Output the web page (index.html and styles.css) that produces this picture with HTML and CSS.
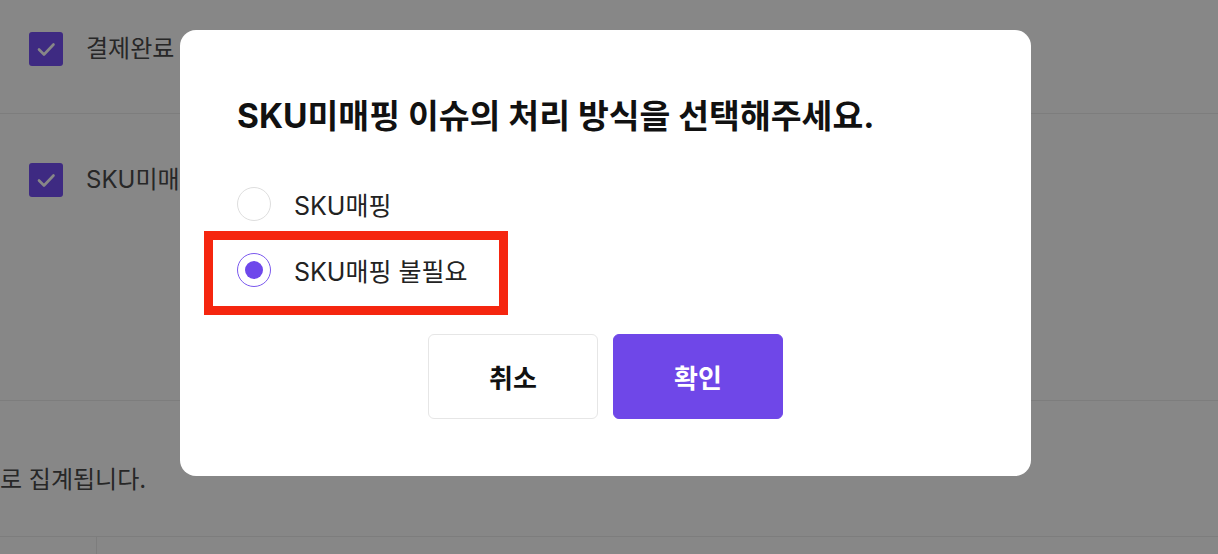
FILE: index.html
```html
<!DOCTYPE html>
<html lang="ko">
<head>
<meta charset="utf-8">
<title>SKU 미매핑 처리</title>
<link rel="stylesheet" href="styles.css">
</head>
<body>
<div class="page">
  <div class="row row-first">
    <span class="checkbox">
      <svg viewBox="0 0 34 34" width="34" height="34"><path d="M10 17.5 L15 22.5 L24.5 12.5" fill="none" stroke="#fff" stroke-width="2.6" stroke-linecap="round" stroke-linejoin="round"/></svg>
    </span>
    <span class="row-label">결제완료</span>
  </div>
  <div class="row row-second">
    <span class="checkbox">
      <svg viewBox="0 0 34 34" width="34" height="34"><path d="M10 17.5 L15 22.5 L24.5 12.5" fill="none" stroke="#fff" stroke-width="2.6" stroke-linecap="round" stroke-linejoin="round"/></svg>
    </span>
    <span class="row-label">SKU미매핑</span>
  </div>
  <div class="note">
    <p class="note-text">로 집계됩니다.</p>
  </div>
  <div class="table-row">
    <div class="cell cell-narrow"></div>
    <div class="cell"></div>
  </div>
</div>

<div class="overlay">
  <div class="modal">
    <h2 class="modal-title">SKU미매핑 이슈의 처리 방식을 선택해주세요.</h2>
    <div class="options">
      <label class="option">
        <span class="radio"></span>
        <span class="option-label">SKU매핑</span>
      </label>
      <label class="option">
        <span class="radio radio-on"><span class="radio-dot"></span></span>
        <span class="option-label">SKU매핑 불필요</span>
      </label>
    </div>
    <div class="actions">
      <button class="btn btn-cancel">취소</button>
      <button class="btn btn-confirm">확인</button>
    </div>
    <div class="highlight"></div>
  </div>
</div>
</body>
</html>
```

FILE: styles.css
```css
* { box-sizing: border-box; }

html, body {
  margin: 0;
  padding: 0;
  background: #ffffff;
  font-family: Inter, "Noto Sans CJK KR", sans-serif;
  color: #444444;
  overflow: hidden;
}

.page {
  width: 1218px;
  height: 554px;
  display: flex;
  flex-direction: column;
}

.row {
  display: flex;
  align-items: flex-start;
  gap: 23px;
  padding-left: 29px;
  border-bottom: 1px solid #ececec;
}

.row-first {
  height: 114px;
  padding-top: 32px;
}

.row-second {
  height: 287px;
  padding-top: 49px;
}

.checkbox {
  width: 34px;
  height: 34px;
  border-radius: 3px;
  background: #7650f5;
  display: flex;
  flex: none;
}

.row-label {
  font-size: 24px;
  line-height: 34px;
  color: #4a4a4a;
}

.note {
  height: 136px;
  border-bottom: 1px solid #ececec;
  padding-top: 64px;
}

.note-text {
  margin: 0;
  font-size: 24px;
  line-height: 30px;
  color: #4a4a4a;
}

.table-row {
  flex: 1;
  display: flex;
}

.cell {
  flex: 1;
}

.cell-narrow {
  flex: none;
  width: 97px;
  border-right: 1px solid #ececec;
}

.overlay {
  position: fixed;
  inset: 0;
  background: rgba(0, 0, 0, 0.47);
  padding: 30px 0 0 180px;
}

.modal {
  position: relative;
  width: 851px;
  height: 446px;
  background: #ffffff;
  border-radius: 16px;
  padding: 65px 57px 0 57px;
}

.modal-title {
  margin: 0;
  font-size: 33.5px;
  line-height: 42px;
  font-weight: 700;
  color: #111111;
}

.options {
  margin-top: 50px;
  display: flex;
  flex-direction: column;
  gap: 32px;
}

.option {
  display: flex;
  align-items: center;
  gap: 23px;
  height: 34px;
}

.radio {
  width: 34px;
  height: 34px;
  border-radius: 50%;
  border: 1.5px solid #dedede;
  display: flex;
  align-items: center;
  justify-content: center;
  flex: none;
}

.radio-on {
  border-color: #7a58ee;
}

.radio-dot {
  width: 18px;
  height: 18px;
  border-radius: 50%;
  background: #6e48eb;
}

.option-label {
  font-size: 25px;
  color: #222222;
}

.actions {
  margin-top: 47px;
  display: flex;
  justify-content: center;
  gap: 15px;
}

.btn {
  width: 170px;
  height: 85px;
  border-radius: 6px;
  font-family: Inter, "Noto Sans CJK KR", sans-serif;
  font-size: 26px;
  font-weight: 700;
  cursor: pointer;
}

.btn-cancel {
  background: #ffffff;
  border: 1.5px solid #e6e6e6;
  color: #111111;
}

.btn-confirm {
  background: #6f47e8;
  border: 1px solid #6f47e8;
  color: #ffffff;
}

.highlight {
  position: absolute;
  left: 24px;
  top: 201px;
  width: 304px;
  height: 84px;
  border: 9px solid #f5260f;
  pointer-events: none;
}
```
